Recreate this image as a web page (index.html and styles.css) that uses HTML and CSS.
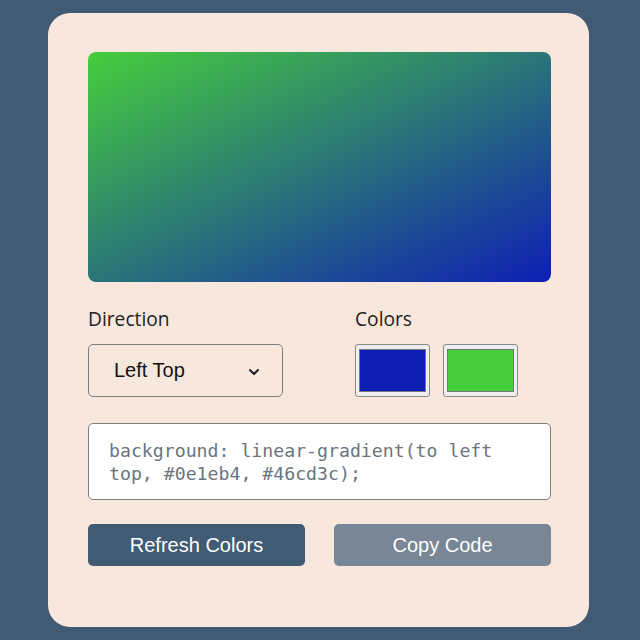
FILE: index.html
```html
<!DOCTYPE html>
<html>
<head>
<meta charset="utf-8">
<link rel="stylesheet" href="styles.css">
</head>
<body>
<div class="card">
  <div class="preview"></div>
  <div class="options">
    <div class="col dir">
      <div class="label">Direction</div>
      <div class="select">
        <span>Left Top</span>
        <svg class="chev" width="12" height="8" viewBox="0 0 12 8"><path d="M2 2 L6 6 L10 2" fill="none" stroke="#222" stroke-width="2" stroke-linecap="round" stroke-linejoin="round"/></svg>
      </div>
    </div>
    <div class="col colors">
      <div class="label">Colors</div>
      <div class="swatches">
        <div class="swatch"><div class="fill blue"></div></div>
        <div class="swatch"><div class="fill green"></div></div>
      </div>
    </div>
  </div>
  <div class="code">background: linear-gradient(to left top, #0e1eb4, #46cd3c);</div>
  <div class="buttons">
    <div class="btn refresh">Refresh Colors</div>
    <div class="btn copy">Copy Code</div>
  </div>
</div>
</body>
</html>
```
FILE: styles.css
```css
html, body { margin: 0; padding: 0; }
body {
  width: 640px;
  height: 640px;
  background: #405b73;
  display: flex;
  align-items: center;
  justify-content: center;
}
.card {
  box-sizing: border-box;
  width: 541px;
  height: 614px;
  margin-left: -3px;
  background: #f8e7dd;
  border-radius: 22px;
  padding: 39px 38px 0 40px;
  display: flex;
  flex-direction: column;
}
.preview {
  height: 230px;
  border-radius: 8px;
  background: linear-gradient(to left top, #0e1eb4, #46cd3c);
}
.options {
  display: flex;
  margin-top: 25px;
}
.dir { width: 267px; }
.label {
  font-family: "Open Sans", Inter, sans-serif;
  font-size: 19.2px;
  color: #222;
  line-height: 24px;
  height: 24px;
}
.select {
  box-sizing: border-box;
  margin-top: 13px;
  width: 195px;
  height: 53px;
  border: 1px solid #7d7d7d;
  border-radius: 5px;
  display: flex;
  align-items: center;
  justify-content: space-between;
  padding: 0 22px 0 25px;
  font-family: "Liberation Sans", Arial, sans-serif;
  font-size: 20px;
  color: #111;
}
.chev { margin-top: 2px; }
.swatches {
  display: flex;
  gap: 13px;
  margin-top: 13px;
}
.swatch {
  box-sizing: border-box;
  width: 75px;
  height: 53px;
  border: 1px solid #8a8a8a;
  border-radius: 3px;
  background: #efefef;
  padding: 4px 3px;
}
.fill {
  box-sizing: border-box;
  width: 100%;
  height: 100%;
  border: 1px solid #777;
}
.blue { background: #0e1eb4; }
.green { background: #46cd3c; }
.code {
  box-sizing: border-box;
  margin-top: 26px;
  height: 77px;
  background: #fff;
  border: 1px solid #7d7d7d;
  border-radius: 5px;
  padding: 15px 30px 0 20px;
  font-family: "DejaVu Sans Mono", "Liberation Mono", monospace;
  font-size: 18.2px;
  line-height: 23px;
  color: #6a7480;
}
.buttons {
  display: flex;
  justify-content: space-between;
  margin-top: 24px;
}
.btn {
  width: 217px;
  height: 42px;
  border-radius: 5px;
  display: flex;
  align-items: center;
  justify-content: center;
  font-family: "Liberation Sans", Arial, sans-serif;
  font-size: 20px;
  color: #fff;
}
.refresh { background: #405b73; }
.copy { background: #788696; }
```
